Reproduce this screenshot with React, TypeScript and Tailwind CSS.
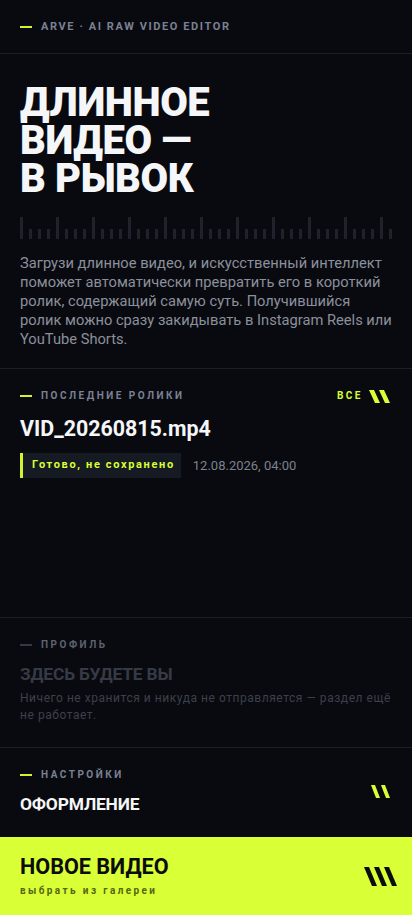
const ACCENT = '#d9ff36';

function Label({ text, dim = false, big = false }: { text: string; dim?: boolean; big?: boolean }) {
    return (
        <div className="flex items-center h-[16px]">
            <span className={`block w-[12px] h-[2px] ${dim ? 'bg-[#353945]' : 'bg-[#d2f42c]'}`} />
            <span
                className={`ml-[9px] font-bold uppercase leading-[16px] ${big ? 'text-[11px] tracking-[0.145em]' : 'text-[10px] tracking-[0.25em]'} ${dim ? 'text-[#5d6270]' : 'text-[#7b8194]'}`}
            >
                {text}
            </span>
        </div>
    );
}

function Slashes({ count, w, h, step, slant, color }: { count: number; w: number; h: number; step: number; slant: number; color: string }) {
    const total = step * (count - 1) + w + slant;
    return (
        <svg width={total} height={h} viewBox={`0 0 ${total} ${h}`}>
            {Array.from({ length: count }).map((_, i) => {
                const x = i * step;
                return (
                    <polygon
                        key={i}
                        points={`${x},0 ${x + w},0 ${x + w + slant},${h} ${x + slant},${h}`}
                        fill={color}
                    />
                );
            })}
        </svg>
    );
}

function Ruler() {
    const bars = Array.from({ length: 42 });
    return (
        <div className="flex items-end gap-[6px] h-[22px] mt-[19px]">
            {bars.map((_, i) => (
                <span
                    key={i}
                    className={`block w-[3px] bg-[#1e222c] ${i % 4 === 0 ? 'h-[22px]' : 'h-[10px]'}`}
                />
            ))}
        </div>
    );
}

export default function App() {
    return (
        <div
            className="min-h-screen w-full bg-[#090a0f] text-white flex flex-col"
            style={{ fontFamily: 'Roboto, "Noto Sans", "Liberation Sans", sans-serif' }}
        >
            {/* Header */}
            <header className="h-[54px] px-5 flex items-center border-b border-[#1c1f29]">
                <Label text="ARVE · AI RAW VIDEO EDITOR" big />
            </header>

            {/* Hero */}
            <section className="px-5 pt-[30px] pb-[19px] border-b border-[#1c1f29]">
                <h1 className="text-[40px] leading-[38px] font-black tracking-[-0.01em] text-[#f5f6f8]">
                    <span className="block">ДЛИННОЕ</span>
                    <span className="block">ВИДЕО —</span>
                    <span className="block">В РЫВОК</span>
                </h1>
                <Ruler />
                <p className="mt-[15px] text-[14.7px] leading-[19px] text-[#8b909c]">
                    Загрузи длинное видео, и искусственный интеллект поможет автоматически превратить его в короткий
                    ролик, содержащий самую суть. Получившийся ролик можно сразу закидывать в Instagram Reels или
                    YouTube Shorts.
                </p>
            </section>

            {/* Recent */}
            <section className="px-5 pt-[19px] h-[249px] border-b border-[#1c1f29]">
                <div className="flex items-center justify-between">
                    <Label text="Последние ролики" />
                    <div className="flex items-center gap-[6px] pr-[2px]">
                        <span className="text-[10px] font-bold tracking-[0.25em] leading-[16px]" style={{ color: ACCENT }}>
                            ВСЕ
                        </span>
                        <Slashes count={2} w={5} h={13} step={10} slant={6} color={ACCENT} />
                    </div>
                </div>
                <div className="mt-[11px] text-[21.4px] leading-[28px] font-bold text-[#f5f6f8]">VID_20260815.mp4</div>
                <div className="mt-[10px] flex items-center">
                    <span
                        className="h-[25px] flex items-center pl-[9px] pr-[6px] bg-[#161a22] border-l-[3px] border-[#d2f42c] text-[11px] font-bold tracking-[0.15em]"
                        style={{ color: ACCENT }}
                    >
                        Готово, не сохранено
                    </span>
                    <span className="ml-[12px] text-[13px] text-[#7c8190]">12.08.2026, 04:00</span>
                </div>
            </section>

            {/* Profile */}
            <section className="px-5 pt-[19px] pb-[23px] border-b border-[#1c1f29]">
                <Label text="Профиль" dim />
                <div className="mt-[9px] text-[17.4px] leading-[24px] font-bold tracking-[-0.01em] text-[#363a46]">
                    ЗДЕСЬ БУДЕТЕ ВЫ
                </div>
                <p className="mt-[4px] text-[12px] leading-[17px] tracking-[0.045em] text-[#3b404c]">
                    Ничего не хранится и никуда не отправляется — раздел ещё не работает.
                </p>
            </section>

            {/* Settings */}
            <section className="px-5 pt-[19px] pb-[21px] flex items-center justify-between">
                <div>
                    <Label text="Настройки" />
                    <div className="mt-[9px] text-[17.4px] leading-[24px] font-bold tracking-[-0.01em] text-[#f5f6f8]">
                        ОФОРМЛЕНИЕ
                    </div>
                </div>
                <div className="pr-[2px]">
                    <Slashes count={2} w={4} h={13} step={10} slant={5} color={ACCENT} />
                </div>
            </section>

            {/* New video */}
            <button className="mt-auto h-[78px] pl-5 pr-[15px] flex items-center justify-between text-left" style={{ backgroundColor: ACCENT }}>
                <div>
                    <div className="text-[21.6px] leading-[26px] font-bold text-[#0b0c0e]">НОВОЕ ВИДЕО</div>
                    <div className="mt-[4px] text-[10px] leading-[14px] font-bold tracking-[0.24em] text-[#55660f]">
                        выбрать из галереи
                    </div>
                </div>
                <Slashes count={3} w={5} h={19} step={10} slant={8} color="#0b0c0e" />
            </button>
        </div>
    );
}
